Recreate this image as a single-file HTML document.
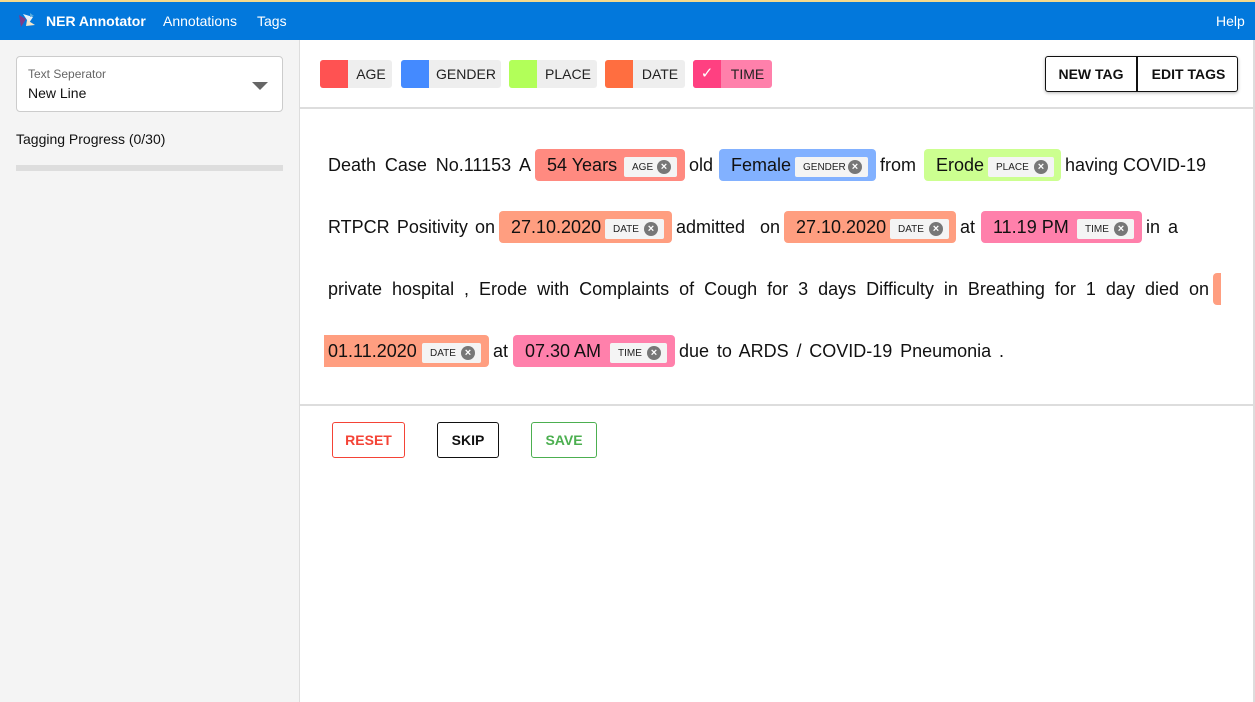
<!DOCTYPE html>
<html><head><meta charset="utf-8"><style>
*{box-sizing:border-box;margin:0;padding:0}
body{width:1255px;height:702px;overflow:hidden;background:#fff;font-family:"Liberation Sans","DejaVu Sans",sans-serif;color:#111;position:relative}
.abs{position:absolute}
.hdr{left:0;top:0;width:1255px;height:40px;background:#0278dc;border-top:2px solid #f5d98c}
.hdr span{position:absolute;color:#fff;font-size:14px;top:11px}
.side{left:0;top:40px;width:300px;height:662px;background:#f4f4f4;border-right:1px solid #ddd}
.tag{top:60px;height:28px;border-radius:3px;background:#eee;font-size:14px;color:#222;display:flex;align-items:center;overflow:hidden}
.tag i{display:block;width:28px;height:28px;margin-right:6px;flex:none}
.tag em{font-style:normal;flex:1;text-align:center;padding-right:4px}
.t{position:absolute;font-size:18px;white-space:nowrap;text-align:justify;text-align-last:justify;height:24px;line-height:24px}
.m{position:absolute;height:32px;border-radius:4px;display:flex;align-items:center;font-size:18px;white-space:nowrap}
.m b{font-weight:normal;margin-left:12px}
.lb{position:absolute;top:8px;height:20px;background:#f4f4f4;border-radius:2px;font-size:10px;display:flex;align-items:center;padding-left:8px;color:#222}
.x{position:absolute;right:6px;top:3px;width:14px;height:14px;border-radius:50%;background:#777;color:#fff;font-size:11px;line-height:14px;text-align:center;font-weight:bold}
.btn{position:absolute;top:422px;height:36px;border-radius:3px;font-size:14px;font-weight:bold;display:flex;align-items:center;justify-content:center}
</style></head><body>
<div class="abs hdr">
<svg class="abs" style="left:17px;top:9px" width="20" height="20" viewBox="0 0 20 20"><path d="M2 4 L9 8 L4 16 Z" fill="#7b3d8a"/><path d="M6 3 L16 6 L12 12 Z" fill="#e8f0f8"/><path d="M10 9 L18 14 L9 15 Z" fill="#f4e6c8"/><path d="M13 2 L17 5 L13 6Z" fill="#5ad"/></svg>
<span style="left:46px;font-weight:bold">NER Annotator</span>
<span style="left:163px">Annotations</span>
<span style="left:257px">Tags</span>
<span style="left:1216px">Help</span>
</div>
<div class="abs side"></div>
<div class="abs" style="left:16px;top:56px;width:267px;height:56px;background:#fff;border:1px solid #ccc;border-radius:4px">
<div class="abs" style="left:11px;top:10px;font-size:12px;color:#666">Text Seperator</div>
<div class="abs" style="left:11px;top:28px;font-size:14px;color:#111">New Line</div>
<div class="abs" style="left:235px;top:25px;width:0;height:0;border-left:8px solid transparent;border-right:8px solid transparent;border-top:8px solid #666"></div>
</div>
<div class="abs" style="left:16px;top:131px;font-size:14px">Tagging Progress (0/30)</div>
<div class="abs" style="left:16px;top:165px;width:267px;height:6px;background:#ddd"></div>

<div class="abs tag" style="left:320px;width:72px"><i style="background:#ff5252"></i><em>AGE</em></div>
<div class="abs tag" style="left:401px;width:100px"><i style="background:#448aff"></i><em>GENDER</em></div>
<div class="abs tag" style="left:509px;width:88px"><i style="background:#b2ff59"></i><em>PLACE</em></div>
<div class="abs tag" style="left:605px;width:80px"><i style="background:#ff6e40"></i><em>DATE</em></div>
<div class="abs tag" style="left:693px;width:79px;background:#ff80ab"><i style="background:#ff4081;color:#fff;font-style:normal;text-align:center;line-height:28px;font-size:15px;font-weight:bold">✓</i><em>TIME</em></div>

<div class="abs" style="left:1045px;top:56px;width:193px;height:36px;border:1px solid #111;border-radius:3px;box-shadow:0 1px 3px rgba(0,0,0,.3);font-size:14px;font-weight:bold">
<div class="abs" style="left:0;top:0;width:92px;height:34px;line-height:34px;text-align:center;border-right:2px solid #111">NEW TAG</div>
<div class="abs" style="left:93px;top:0;width:99px;height:34px;line-height:34px;text-align:center">EDIT TAGS</div>
</div>
<div class="abs" style="left:300px;top:107px;width:955px;height:2px;background:#ddd"></div>

<div class="t" style="left:328px;top:153px;width:203px">Death Case No.11153 A</div>
<div class="m" style="left:535px;top:149px;width:150px;background:#ff8a80"><b>54 Years</b><div class="lb" style="left:89px;width:53px">AGE<span class="x">×</span></div></div>
<div class="t" style="left:689px;top:153px;width:26px">old</div>
<div class="m" style="left:719px;top:149px;width:157px;background:#82b1ff"><b>Female</b><div class="lb" style="left:76px;width:73px">GENDER<span class="x">×</span></div></div>
<div class="t" style="left:880px;top:153px;width:40px">from</div>
<div class="m" style="left:924px;top:149px;width:137px;background:#ccff90"><b>Erode</b><div class="lb" style="left:64px;width:66px">PLACE<span class="x">×</span></div></div>
<div class="t" style="left:1065px;top:153px;width:141px">having COVID-19</div>

<div class="t" style="left:328px;top:215px;width:167px">RTPCR Positivity on</div>
<div class="m" style="left:499px;top:211px;width:173px;background:#ff9e80"><b>27.10.2020</b><div class="lb" style="left:106px;width:59px">DATE<span class="x">×</span></div></div>
<div class="t" style="left:676px;top:215px;width:104px">admitted on</div>
<div class="m" style="left:784px;top:211px;width:172px;background:#ff9e80"><b>27.10.2020</b><div class="lb" style="left:106px;width:59px">DATE<span class="x">×</span></div></div>
<div class="t" style="left:960px;top:215px;width:17px">at</div>
<div class="m" style="left:981px;top:211px;width:161px;background:#ff80ab"><b>11.19 PM</b><div class="lb" style="left:96px;width:57px">TIME<span class="x">×</span></div></div>
<div class="t" style="left:1146px;top:215px;width:32px">in a</div>

<div class="t" style="left:328px;top:277px;width:881px">private hospital , Erode with Complaints of Cough for 3 days Difficulty in Breathing for 1 day died on</div>
<div class="m" style="left:1213px;top:273px;width:8px;background:#ff9e80;border-radius:4px 0 0 4px"></div>

<div class="m" style="left:324px;top:335px;width:165px;background:#ff9e80;border-radius:0 4px 4px 0"><b style="margin-left:4px">01.11.2020</b><div class="lb" style="left:98px;width:59px">DATE<span class="x">×</span></div></div>
<div class="t" style="left:493px;top:339px;width:17px">at</div>
<div class="m" style="left:513px;top:335px;width:162px;background:#ff80ab"><b>07.30 AM</b><div class="lb" style="left:97px;width:57px">TIME<span class="x">×</span></div></div>
<div class="t" style="left:679px;top:339px;width:325px">due to ARDS / COVID-19 Pneumonia .</div>

<div class="abs" style="left:300px;top:404px;width:955px;height:2px;background:#ddd"></div>
<div class="btn" style="left:332px;width:73px;border:1px solid #f44336;color:#f44336">RESET</div>
<div class="btn" style="left:437px;width:62px;border:1px solid #111;color:#111">SKIP</div>
<div class="btn" style="left:531px;width:66px;border:1px solid #4caf50;color:#4caf50">SAVE</div>
<div class="abs" style="left:1253px;top:40px;width:2px;height:662px;background:#ddd"></div>
</body></html>
